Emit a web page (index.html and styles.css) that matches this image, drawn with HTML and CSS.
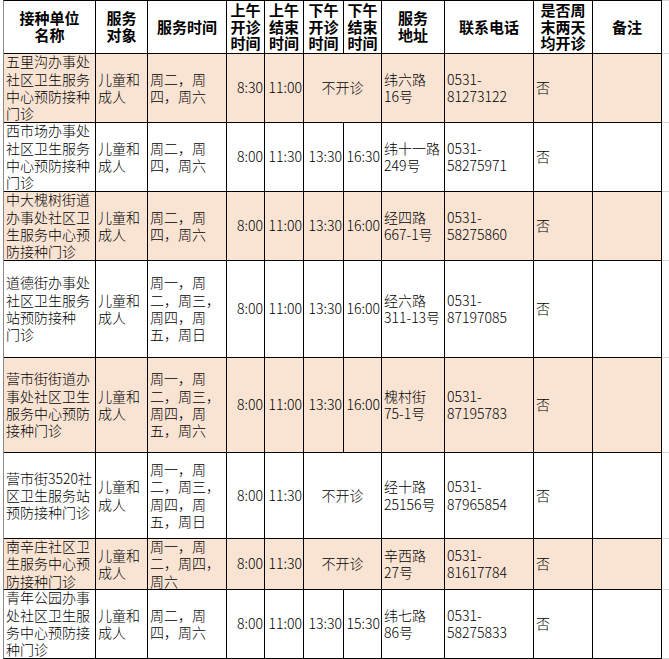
FILE: index.html
```html
<!DOCTYPE html>
<html lang="zh-CN">
<head>
<meta charset="utf-8">
<title>接种单位</title>
<link rel="stylesheet" href="styles.css">
</head>
<body>
<div class="sheet">
  <div class="grid">
    <div class="c h"><div>接种单位<br>名称</div></div>
    <div class="c h"><div>服务<br>对象</div></div>
    <div class="c h"><div>服务时间</div></div>
    <div class="c h"><div>上午<br>开诊<br>时间</div></div>
    <div class="c h"><div>上午<br>结束<br>时间</div></div>
    <div class="c h"><div>下午<br>开诊<br>时间</div></div>
    <div class="c h"><div>下午<br>结束<br>时间</div></div>
    <div class="c h"><div>服务<br>地址</div></div>
    <div class="c h"><div>联系电话</div></div>
    <div class="c h"><div>是否周<br>末两天<br>均开诊</div></div>
    <div class="c h"><div>备注</div></div>

    <div class="c pk"><div>五里沟办事处<br>社区卫生服务<br>中心预防接种<br>门诊</div></div>
    <div class="c pk"><div>儿童和<br>成人</div></div>
    <div class="c pk"><div>周二，周<br>四，周六</div></div>
    <div class="c pk t"><div>8:30</div></div>
    <div class="c pk t"><div>11:00</div></div>
    <div class="c pk mid span2"><div>不开诊</div></div>
    <div class="c pk"><div>纬六路<br>16号</div></div>
    <div class="c pk"><div>0531-<br>81273122</div></div>
    <div class="c pk"><div>否</div></div>
    <div class="c pk"></div>

    <div class="c"><div>西市场办事处<br>社区卫生服务<br>中心预防接种<br>门诊</div></div>
    <div class="c"><div>儿童和<br>成人</div></div>
    <div class="c"><div>周二，周<br>四，周六</div></div>
    <div class="c t"><div>8:00</div></div>
    <div class="c t"><div>11:30</div></div>
    <div class="c t"><div>13:30</div></div>
    <div class="c t"><div>16:30</div></div>
    <div class="c"><div>纬十一路<br>249号</div></div>
    <div class="c"><div>0531-<br>58275971</div></div>
    <div class="c"><div>否</div></div>
    <div class="c"></div>

    <div class="c pk"><div>中大槐树街道<br>办事处社区卫<br>生服务中心预<br>防接种门诊</div></div>
    <div class="c pk"><div>儿童和<br>成人</div></div>
    <div class="c pk"><div>周二，周<br>四，周六</div></div>
    <div class="c pk t"><div>8:00</div></div>
    <div class="c pk t"><div>11:00</div></div>
    <div class="c pk t"><div>13:30</div></div>
    <div class="c pk t"><div>16:00</div></div>
    <div class="c pk"><div>经四路<br>667-1号</div></div>
    <div class="c pk"><div>0531-<br>58275860</div></div>
    <div class="c pk"><div>否</div></div>
    <div class="c pk"></div>

    <div class="c"><div>道德街办事处<br>社区卫生服务<br>站预防接种<br>门诊</div></div>
    <div class="c"><div>儿童和<br>成人</div></div>
    <div class="c"><div>周一，周<br>二，周三，<br>周四，周<br>五，周日</div></div>
    <div class="c t"><div>8:00</div></div>
    <div class="c t"><div>11:00</div></div>
    <div class="c t"><div>13:30</div></div>
    <div class="c t"><div>16:00</div></div>
    <div class="c"><div>经六路<br>311-13号</div></div>
    <div class="c"><div>0531-<br>87197085</div></div>
    <div class="c"><div>否</div></div>
    <div class="c"></div>

    <div class="c pk"><div>营市街街道办<br>事处社区卫生<br>服务中心预防<br>接种门诊</div></div>
    <div class="c pk"><div>儿童和<br>成人</div></div>
    <div class="c pk"><div>周一，周<br>二，周三，<br>周四，周<br>五，周六</div></div>
    <div class="c pk t"><div>8:00</div></div>
    <div class="c pk t"><div>11:00</div></div>
    <div class="c pk t"><div>13:30</div></div>
    <div class="c pk t"><div>16:00</div></div>
    <div class="c pk"><div>槐村街<br>75-1号</div></div>
    <div class="c pk"><div>0531-<br>87195783</div></div>
    <div class="c pk"><div>否</div></div>
    <div class="c pk"></div>

    <div class="c"><div>营市街3520社<br>区卫生服务站<br>预防接种门诊</div></div>
    <div class="c"><div>儿童和<br>成人</div></div>
    <div class="c"><div>周一，周<br>二，周三，<br>周四，周<br>五，周日</div></div>
    <div class="c t"><div>8:00</div></div>
    <div class="c t"><div>11:30</div></div>
    <div class="c mid span2"><div>不开诊</div></div>
    <div class="c"><div>经十路<br>25156号</div></div>
    <div class="c"><div>0531-<br>87965854</div></div>
    <div class="c"><div>否</div></div>
    <div class="c"></div>

    <div class="c pk"><div>南辛庄社区卫<br>生服务中心预<br>防接种门诊</div></div>
    <div class="c pk"><div>儿童和<br>成人</div></div>
    <div class="c pk"><div>周一，周<br>二，周四，<br>周六</div></div>
    <div class="c pk t"><div>8:00</div></div>
    <div class="c pk t"><div>11:30</div></div>
    <div class="c pk mid span2"><div>不开诊</div></div>
    <div class="c pk"><div>辛西路<br>27号</div></div>
    <div class="c pk"><div>0531-<br>81617784</div></div>
    <div class="c pk"><div>否</div></div>
    <div class="c pk"></div>

    <div class="c"><div>青年公园办事<br>处社区卫生服<br>务中心预防接<br>种门诊</div></div>
    <div class="c"><div>儿童和<br>成人</div></div>
    <div class="c"><div>周二，周<br>四，周六</div></div>
    <div class="c t"><div>8:00</div></div>
    <div class="c t"><div>11:00</div></div>
    <div class="c t"><div>13:30</div></div>
    <div class="c t"><div>15:30</div></div>
    <div class="c"><div>纬七路<br>86号</div></div>
    <div class="c"><div>0531-<br>58275833</div></div>
    <div class="c"><div>否</div></div>
    <div class="c"></div>
  </div>
  <div class="gutter">
    <div></div><div></div><div></div><div></div><div></div><div></div><div></div><div></div><div></div>
  </div>
</div>
</body>
</html>
```

FILE: styles.css
```css
html, body {
  margin: 0;
  padding: 0;
  background: #fff;
}

body {
  width: 669px;
  height: 659px;
  overflow: hidden;
  font-family: "Noto Sans CJK SC", "Noto Sans", sans-serif;
  color: #000;
}

.sheet {
  display: flex;
  align-items: flex-start;
  padding-left: 3px;
}

.grid {
  display: grid;
  grid-template-columns: 91px 51px 78px 37px 38px 39px 37px 62px 88px 58px 68px;
  grid-template-rows: 52px 68px 68px 68px 96px 94px 85px 50px 68px;
  gap: 1px;
  background: #000;
  border: 1px solid #000;
  border-left-color: #8a8a8a;
}

.c {
  background: #fff;
  display: flex;
  align-items: center;
  justify-content: flex-start;
  overflow: hidden;
  padding: 0 0 0 2px;
  font-size: 14px;
  line-height: 17.3px;
  font-weight: 300;
  white-space: nowrap;
}

.c.pk {
  background: #f9e4d4;
}

.c.h {
  justify-content: center;
  text-align: center;
  padding: 0;
  font-size: 15px;
  line-height: 16.6px;
  font-weight: 700;
}

.c.t {
  justify-content: flex-end;
  padding: 0 1px 0 0;
}

.c.mid {
  justify-content: center;
  padding: 0;
}

.span2 {
  grid-column: span 2;
}

.gutter {
  width: 7px;
  display: grid;
  grid-template-rows: 52px 68px 68px 68px 96px 94px 85px 50px 68px;
  row-gap: 1px;
  padding: 1px 0;
  background: #d6d6d6;
}

.gutter div {
  background: #fff;
}
```
